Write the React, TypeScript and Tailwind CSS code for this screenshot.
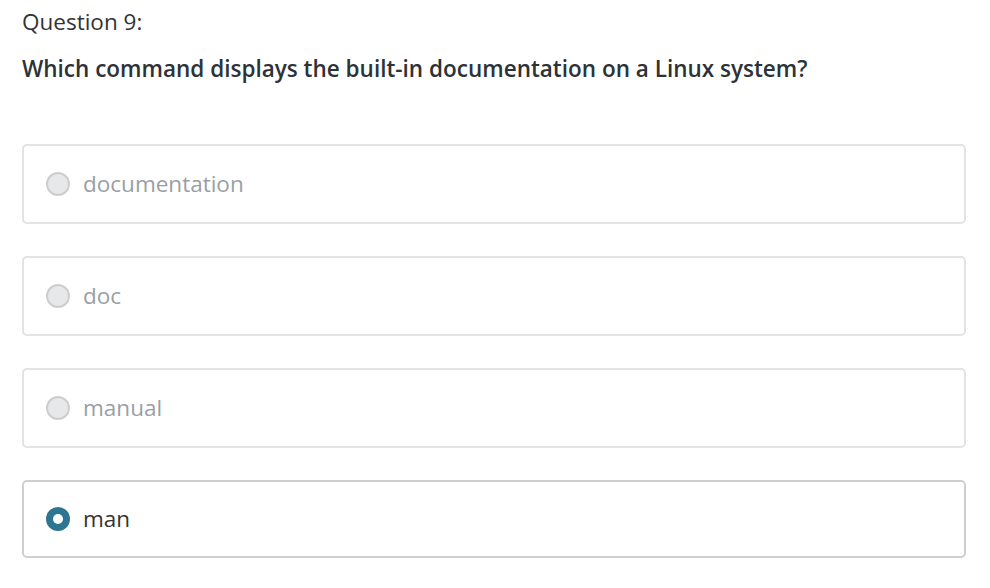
import React from "react";

const options = ["documentation", "doc", "manual", "man"];
const selected = 3;

const App: React.FC = () => {
    return (
        <div className="min-h-[588px] bg-white pl-[22px] pr-[24px] pt-[6px] font-['Open_Sans',sans-serif]">
            {/* Header */}
            <p className="text-[22.5px] leading-[32px] text-[#333333]">Question 9:</p>
            <h2 className="mt-[15px] text-[22.5px] leading-[32px] font-semibold text-[#2d3238]">
                Which command displays the built-in documentation on a Linux system?
            </h2>

            {/* Options */}
            <div className="mt-[59px] flex flex-col gap-[32px]">
                {options.map((opt, i) => {
                    const isSel = i === selected;
                    return (
                        <div
                            key={opt}
                            className={
                                isSel
                                    ? "flex h-[78px] items-center rounded-[5px] border-2 border-[#cfcfcf] pl-[22px]"
                                    : "flex h-[80px] items-center rounded-[5px] border-2 border-[#e3e3e3] pl-[22px]"
                            }
                        >
                            {isSel ? (
                                <span className="flex h-[24px] w-[24px] items-center justify-center rounded-full bg-[#2e7592]">
                                    <span className="h-[10px] w-[10px] rounded-full bg-white" />
                                </span>
                            ) : (
                                <span className="h-[24px] w-[24px] rounded-full border-2 border-[#cdcdcd] bg-[#e7e8ea]" />
                            )}
                            <span
                                className={
                                    isSel
                                        ? "ml-[13px] text-[22.5px] text-[#333333]"
                                        : "ml-[13px] text-[22.5px] text-[#9a9ea5]"
                                }
                            >
                                {opt}
                            </span>
                        </div>
                    );
                })}
            </div>
        </div>
    );
};

export default App;
